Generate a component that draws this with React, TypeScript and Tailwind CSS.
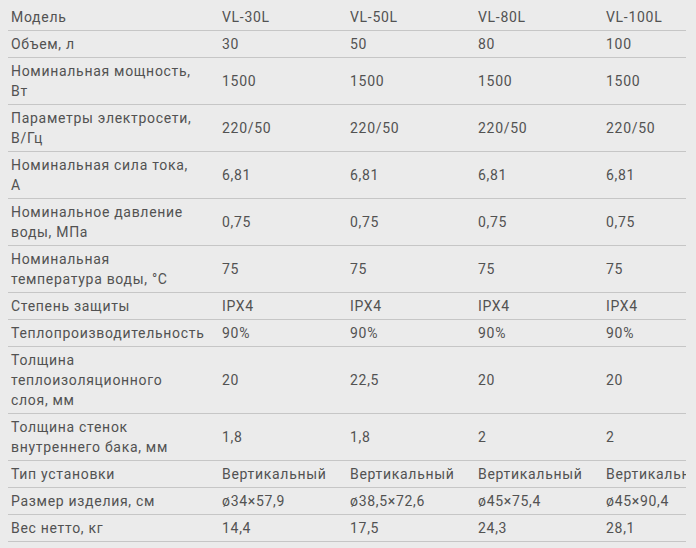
const MODELS = ['VL-30L', 'VL-50L', 'VL-80L', 'VL-100L'];

const ROWS: { label: string[]; values: string[] }[] = [
  { label: ['Объем, л'], values: ['30', '50', '80', '100'] },
  { label: ['Номинальная мощность,', 'Вт'], values: ['1500', '1500', '1500', '1500'] },
  { label: ['Параметры электросети,', 'В/Гц'], values: ['220/50', '220/50', '220/50', '220/50'] },
  { label: ['Номинальная сила тока,', 'А'], values: ['6,81', '6,81', '6,81', '6,81'] },
  { label: ['Номинальное давление', 'воды, МПа'], values: ['0,75', '0,75', '0,75', '0,75'] },
  { label: ['Номинальная', 'температура воды, °С'], values: ['75', '75', '75', '75'] },
  { label: ['Степень защиты'], values: ['IPX4', 'IPX4', 'IPX4', 'IPX4'] },
  { label: ['Теплопроизводительность'], values: ['90%', '90%', '90%', '90%'] },
  { label: ['Толщина', 'теплоизоляционного', 'слоя, мм'], values: ['20', '22,5', '20', '20'] },
  { label: ['Толщина стенок', 'внутреннего бака, мм'], values: ['1,8', '1,8', '2', '2'] },
  { label: ['Тип установки'], values: ['Вертикальный', 'Вертикальный', 'Вертикальный', 'Вертикальный'] },
  { label: ['Размер изделия, см'], values: ['ø34×57,9', 'ø38,5×72,6', 'ø45×75,4', 'ø45×90,4'] },
  { label: ['Вес нетто, кг'], values: ['14,4', '17,5', '24,3', '28,1'] },
];

function Row({ label, values }: { label: string[]; values: string[] }) {
  return (
    <div className="flex w-[726px] items-center border-b border-[#c6c6c6] py-[3px]">
      <div className="w-[214px] shrink-0 whitespace-nowrap pl-[3px]">
        {label.map((line, i) => (
          <div key={i}>{line}</div>
        ))}
      </div>
      {values.map((v, i) => (
        <div key={i} className="w-[128px] shrink-0 whitespace-nowrap">
          {v}
        </div>
      ))}
    </div>
  );
}

export default function App() {
  return (
    <div className="h-[548px] w-[696px] overflow-hidden bg-[#ebebeb] pt-1">
      {/* the last column runs past the edge in the original, so it's clipped on purpose */}
      <div
        className="ml-2 w-[678px] overflow-hidden text-[14px] leading-5 tracking-[0.05em] text-[#525252]"
        style={{ fontFamily: 'Roboto, "Liberation Sans", sans-serif' }}
      >
        <Row label={['Модель']} values={MODELS} />
        {ROWS.map((r, i) => (
          <Row key={i} label={r.label} values={r.values} />
        ))}
      </div>
    </div>
  );
}
